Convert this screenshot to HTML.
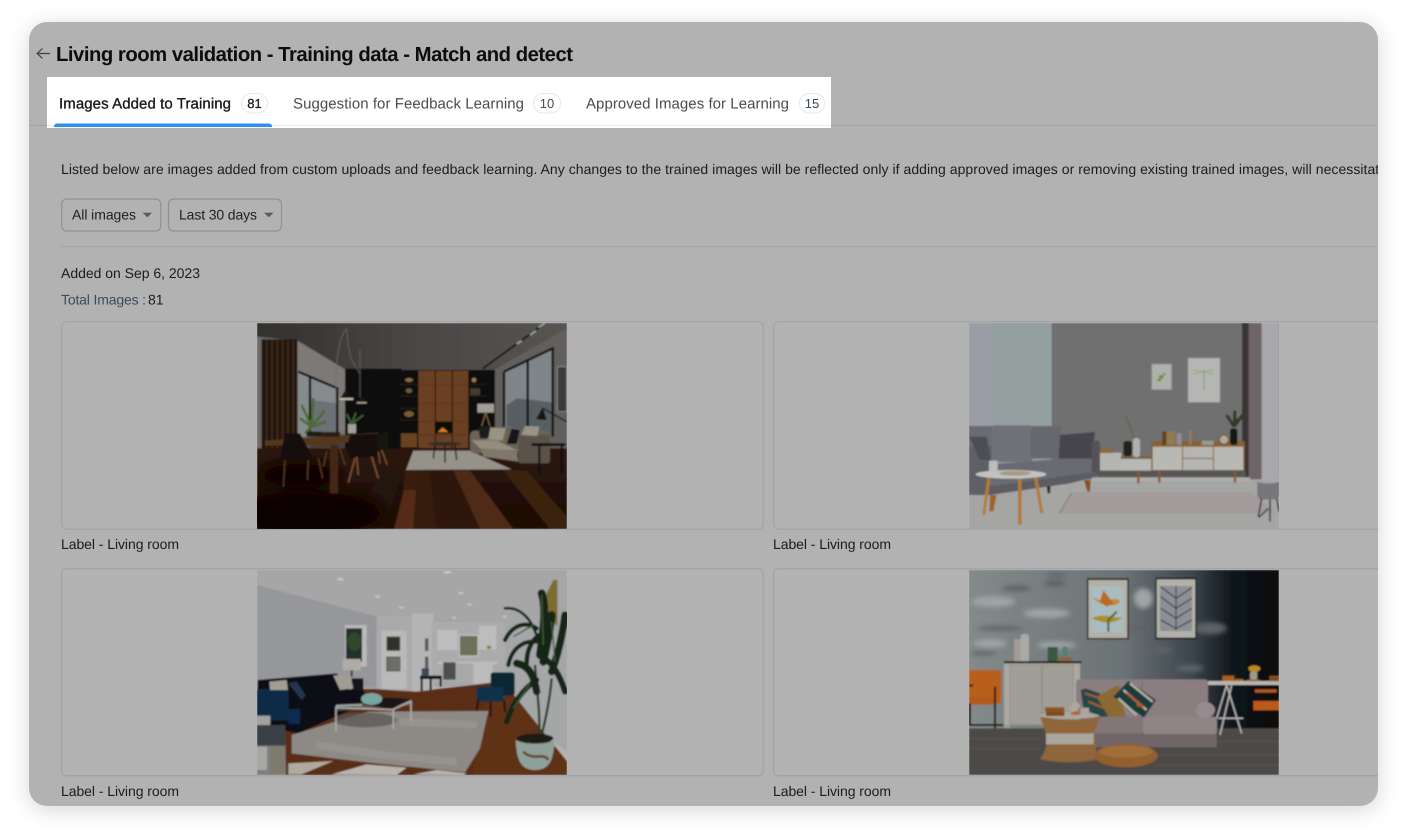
<!DOCTYPE html>
<html lang="en">
<head>
<meta charset="utf-8">
<title>Living room validation</title>
<style>
html,body{margin:0;padding:0;background:#fff;width:1407px;height:832px;overflow:hidden}
svg{display:block}
text{font-family:"Liberation Sans",Arial,sans-serif;text-rendering:geometricPrecision}
</style>
</head>
<body>
<svg xmlns="http://www.w3.org/2000/svg" width="1407" height="832" viewBox="0 0 1407 832">
<defs>
<filter id="sh" x="-10%" y="-10%" width="120%" height="120%"><feDropShadow dx="0" dy="4" stdDeviation="11" flood-color="#000" flood-opacity=".16"/></filter>
<filter id="b" x="-5%" y="-5%" width="110%" height="110%"><feGaussianBlur stdDeviation="2.600"/></filter>
<filter id="b2" x="-40%" y="-40%" width="180%" height="180%"><feGaussianBlur stdDeviation="16"/></filter>
<filter id="b3" x="-40%" y="-80%" width="180%" height="260%"><feGaussianBlur stdDeviation="7"/></filter>
<clipPath id="panel"><rect x="29" y="22" width="1349" height="784" rx="18"/></clipPath>
<clipPath id="c1"><rect x="21" y="9" width="930" height="618"/></clipPath>
<clipPath id="c2"><rect x="27" y="9" width="930" height="618"/></clipPath>
<clipPath id="c3"><rect x="21" y="15" width="930" height="615"/></clipPath>
<clipPath id="c4"><rect x="27" y="15" width="930" height="615"/></clipPath>
<linearGradient id="ceil" x1="0" y1="0" x2="1" y2="0"><stop offset="0" stop-color="#33302e"/><stop offset=".5" stop-color="#4a4644"/><stop offset="1" stop-color="#575452"/></linearGradient>
<linearGradient id="floor" x1="0" y1="0" x2="0" y2="1"><stop offset="0" stop-color="#2c1509"/><stop offset="1" stop-color="#1a0c05"/></linearGradient>
<linearGradient id="wall4" x1="0" y1="0" x2="1" y2="0"><stop offset="0" stop-color="#828a8a"/><stop offset=".5" stop-color="#6a7274"/><stop offset=".72" stop-color="#3c454d"/><stop offset=".85" stop-color="#10151b"/><stop offset="1" stop-color="#07090c"/></linearGradient>
<linearGradient id="wall3" x1="0" y1="0" x2="1" y2=".3"><stop offset="0" stop-color="#929398"/><stop offset="1" stop-color="#a8a8ab"/></linearGradient>
</defs>

<rect x="29" y="22" width="1349" height="784" rx="18" fill="#b2b2b2" filter="url(#sh)"/>

<g clip-path="url(#panel)">
<!-- header -->
<path d="M50 53.500H37.500M42.500 48.500L37.200 53.500L42.500 58.500" fill="none" stroke="#3f3f3f" stroke-width="1.200"/>
<text x="56" y="61" font-size="20.300" font-weight="700" fill="#0d0d0d" textLength="517" lengthAdjust="spacing">Living room validation - Training data - Match and detect</text>

<line x1="29" y1="125.500" x2="1378" y2="125.500" stroke="#a2a3a5" stroke-width="1"/>

<!-- highlighted tabs -->
<rect x="47" y="77" width="784" height="51" fill="#fff"/>
<line x1="47" y1="125.500" x2="831" y2="125.500" stroke="#e9ebee" stroke-width="1"/>
<path d="M54 127v-.5a3 3 0 0 1 3-3h212a3 3 0 0 1 3 3v.5z" fill="#2e8ff0"/>

<text x="59" y="108.500" font-size="15" fill="#1b1b1b" stroke="#1b1b1b" stroke-width=".35" textLength="172" lengthAdjust="spacing">Images Added to Training</text>
<rect x="241.500" y="93.500" width="26" height="19.500" rx="9.700" fill="#fff" stroke="#e6e8ee"/>
<text x="254.500" y="108" font-size="13" text-anchor="middle" fill="#1b1b1b" stroke="#1b1b1b" stroke-width=".3">81</text>

<text x="293" y="108.500" font-size="15" fill="#4a4c50" textLength="231" lengthAdjust="spacing">Suggestion for Feedback Learning</text>
<rect x="533.500" y="93.500" width="27" height="19.500" rx="9.700" fill="#fff" stroke="#e6e8ee"/>
<text x="547" y="108" font-size="13" text-anchor="middle" fill="#4a4c50">10</text>

<text x="586" y="108.500" font-size="15" fill="#4a4c50" textLength="203" lengthAdjust="spacing">Approved Images for Learning</text>
<rect x="799.500" y="93.500" width="25" height="19.500" rx="9.700" fill="#fff" stroke="#e6e8ee"/>
<text x="812" y="108" font-size="13" text-anchor="middle" fill="#3d4a5c">15</text>

<!-- intro -->
<text x="61" y="174" font-size="14" fill="#1c1c1c" textLength="1326" lengthAdjust="spacing">Listed below are images added from custom uploads and feedback learning. Any changes to the trained images will be reflected only if adding approved images or removing existing trained images, will necessitate</text>

<!-- dropdowns -->
<rect x="61.700" y="199" width="99" height="32" rx="5" fill="none" stroke="#8e9196" stroke-width="1.200"/>
<text x="72" y="219.500" font-size="14" fill="#1f1f1f" textLength="64" lengthAdjust="spacing">All images</text>
<path d="M142.500 212.800h9.500l-4.700 4.500z" fill="#55585c"/>
<rect x="168.500" y="199" width="113" height="32" rx="5" fill="none" stroke="#8e9196" stroke-width="1.200"/>
<text x="179" y="219.500" font-size="14" fill="#1f1f1f" textLength="78" lengthAdjust="spacing">Last 30 days</text>
<path d="M264 212.800h9.500l-4.700 4.500z" fill="#55585c"/>

<line x1="61" y1="246.500" x2="1378" y2="246.500" stroke="#a2a5a9" stroke-width="1"/>

<text x="61" y="278" font-size="14" fill="#1c1c1c" textLength="139" lengthAdjust="spacing">Added on Sep 6, 2023</text>
<text x="61" y="304.500" font-size="14" fill="#3d4a5c" textLength="85" lengthAdjust="spacing">Total Images :</text>
<text x="148" y="304.500" font-size="14" fill="#1c1c1c">81</text>

<!-- cards -->
<rect x="61.700" y="321.700" width="701.500" height="207.500" rx="5" fill="#b3b3b3" stroke="#a1a4a8" stroke-width="1.300"/>
<rect x="773.700" y="321.700" width="640" height="207.500" rx="5" fill="#b3b3b3" stroke="#a1a4a8" stroke-width="1.300"/>
<rect x="61.700" y="568.700" width="701.500" height="207" rx="5" fill="#b3b3b3" stroke="#a1a4a8" stroke-width="1.300"/>
<rect x="773.700" y="568.700" width="640" height="207" rx="5" fill="#b3b3b3" stroke="#a1a4a8" stroke-width="1.300"/>

<text x="61" y="549" font-size="14" fill="#1c1c1c" textLength="118" lengthAdjust="spacing">Label - Living room</text>
<text x="773" y="549" font-size="14" fill="#1c1c1c" textLength="118" lengthAdjust="spacing">Label - Living room</text>
<text x="61" y="796" font-size="14" fill="#1c1c1c" textLength="118" lengthAdjust="spacing">Label - Living room</text>
<text x="773" y="796" font-size="14" fill="#1c1c1c" textLength="118" lengthAdjust="spacing">Label - Living room</text>

<!-- Image 1 : dark modern room -->
<g transform="translate(250 320) scale(.33333)"><g clip-path="url(#c1)"><g filter="url(#b)">
<rect x="21" y="9" width="930" height="618" fill="#454140"/>
<polygon points="21,9 951,9 951,25 735,148 285,148 142,62 21,50" fill="url(#ceil)"/>
<polygon points="21,50 142,62 285,148 285,345 21,430" fill="#6c6967"/>
<polygon points="142,62 285,148 285,340 142,340" fill="#7c7977"/>
<polygon points="735,148 951,25 951,390 735,360" fill="#625f5d"/>
<rect x="35" y="58" width="107" height="382" fill="#241509"/>
<g stroke="#41291a" stroke-width="5"><path d="M50 60V438M66 60V438M82 60V438M98 60V438M114 60V438M130 60V438"/></g>
<polygon points="145,155 262,205 262,345 145,350" fill="#868c8e"/>
<polygon points="185,240 262,250 262,345 185,345" fill="#6a7275"/>
<path d="M145 155L262 205V345M180 172V345" fill="none" stroke="#0b0b0b" stroke-width="7"/>
<g stroke="#4d6a34" stroke-width="8" fill="none"><path d="M185 320L155 255M185 320L190 235M185 320L225 270M185 320L150 295M185 320L228 305M185 320L165 340"/></g>
<rect x="285" y="146" width="170" height="240" fill="#0a0807"/>
<rect x="450" y="150" width="285" height="236" fill="#110b07"/>
<rect x="505" y="152" width="150" height="232" fill="#6a3f22"/>
<path d="M556 152V384M607 152V384" stroke="#2d1a0d" stroke-width="4" fill="none"/>
<path d="M505 193H655M505 250H655M505 305H655M505 345H655" stroke="#54321a" stroke-width="2" fill="none"/>
<rect x="555" y="305" width="52" height="35" fill="#0b0806"/>
<path d="M563 336L578 322L595 336z" fill="#d97b2a"/>
<rect x="453" y="340" width="48" height="42" fill="#6b4222"/>
<ellipse cx="477" cy="282" rx="15" ry="9" fill="#7a5a34"/>
<ellipse cx="477" cy="212" rx="10" ry="7" fill="#6c5a42"/>
<ellipse cx="477" cy="180" rx="12" ry="6" fill="#8a6a3a"/>
<ellipse cx="672" cy="180" rx="7" ry="7" fill="#9a7a48"/>
<rect x="660" y="205" width="30" height="20" fill="#463a2e"/>
<path d="M450 193H505M450 228H505M450 265H505M450 300H505M658 193H708M658 228H708" stroke="#2c2018" stroke-width="3"/>
<rect x="682" y="251" width="50" height="27" fill="#a09c96"/>
<path d="M707 278L695 318M707 278L720 318" stroke="#8a6a4a" stroke-width="3"/>
<polygon points="762,155 908,85 908,350 762,320" fill="#7f8589"/>
<polygon points="770,255 800,235 850,240 908,248 908,350 770,320" fill="#585e63"/>
<path d="M762 155L908 85V350M833 120V320M762 155V320" fill="none" stroke="#0b0b0b" stroke-width="7"/>
<rect x="922" y="140" width="28" height="135" fill="#3b3938" stroke="#8a8886" stroke-width="3"/>
<path d="M698 146L885 10" stroke="#0f0f0f" stroke-width="5"/>
<path d="M800 72L815 62M840 45L858 32M866 22L885 10" stroke="#a5a5a5" stroke-width="5"/>
<rect x="21" y="385" width="930" height="242" fill="url(#floor)"/>
<polygon points="610,452 660,452 790,627 690,627" fill="#4f2a13"/>
<polygon points="500,452 540,452 560,627 490,627" fill="#361b0c"/>
<polygon points="432,627 462,510 498,510 490,627" fill="#542c14"/>
<polygon points="465,452 505,452 500,510 460,510" fill="#381b0b"/>
<polygon points="760,452 830,452 951,590 951,627 900,627" fill="#3a2010"/>
<polygon points="395,452 460,452 400,627 300,627" fill="#241208"/>
<polygon points="545,452 610,452 690,627 560,627" fill="#2d1609"/>
<ellipse cx="170" cy="580" rx="230" ry="70" fill="#0a0503" filter="url(#b2)"/>
<ellipse cx="150" cy="465" rx="120" ry="40" fill="#0c0604" filter="url(#b2)"/>
<polygon points="490,392 660,392 785,448 468,450" fill="#959289"/>
<rect x="660" y="332" width="240" height="68" rx="14" fill="#6c6458"/>
<polygon points="690,380 800,395 805,425 700,410" fill="#7f7769"/>
<polygon points="665,360 740,362 805,392 690,385" fill="#948c7e"/>
<rect x="805" y="345" width="95" height="85" rx="8" fill="#5a5248"/>
<path d="M710 358L720 322L768 325L758 362z" fill="#9a9282"/>
<path d="M690 355L685 322L722 318L715 355z" fill="#1a1a1f"/>
<path d="M770 372L785 325L810 330L800 372z" fill="#15161b"/>
<path d="M815 345L825 318L868 320L862 348z" fill="#9a9486"/>
<ellipse cx="584" cy="372" rx="52" ry="6" fill="#332e2a"/>
<path d="M555 375L550 415M615 375L620 420M585 375V428" stroke="#15110e" stroke-width="4"/>
<rect x="845" y="370" width="102" height="8" fill="#0c0b0a"/><path d="M868 375V460M935 375V460" stroke="#0c0b0a" stroke-width="6"/>
<path d="M878 265L950 305" stroke="#16120f" stroke-width="4"/><polygon points="858,298 878,262 890,300" fill="#15120f"/>
<polygon points="45,362 385,338 375,352 230,378 45,376" fill="#55381c"/>
<rect x="240" y="375" width="24" height="145" fill="#452712"/>
<polygon points="290,385 300,345 388,340 385,410 300,415" fill="#12100e"/>
<path d="M315 415L295 488M365 410L385 475M320 410L325 465" stroke="#7a5030" stroke-width="5"/>
<polygon points="380,345 417,330 412,390 382,395" fill="#17130f"/>
<path d="M395 390L412 435M385 395L390 430" stroke="#7a5030" stroke-width="4"/>
<polygon points="92,400 105,340 150,340 185,405 185,420 92,420" fill="#13110f"/>
<path d="M105 420L100 500M205 415L218 475M175 420L172 480" stroke="#5a3a22" stroke-width="4"/>
<rect x="170" y="335" width="45" height="15" fill="#1c1a18"/>
<path d="M230 395L220 440M270 385L285 435" stroke="#5a3a22" stroke-width="4"/>
<path d="M290 25C260 60 255 160 258 250M290 25C295 100 300 120 330 160M330 90V232" fill="none" stroke="#6e6a66" stroke-width="2"/>
<polygon points="267,240 288,208 310,240" fill="#15120f"/><rect x="268" y="234" width="42" height="6" fill="#bfb9a6"/>
<polygon points="320,250 335,230 350,250" fill="#1c1814"/><rect x="320" y="246" width="30" height="5" fill="#a89c86"/>
<rect x="294" y="312" width="24" height="28" fill="#a2a09a"/>
<g stroke="#3f5a34" stroke-width="6" fill="none"><path d="M305 312L290 282M305 312L318 278M305 312L340 285"/></g>
<rect x="215" y="336" width="55" height="14" fill="#2a1c12"/>
</g></g></g>

<!-- Image 2 : grey wall room -->
<g transform="translate(960 320) scale(.33333)"><g clip-path="url(#c2)"><g filter="url(#b)">
<rect x="27" y="9" width="250" height="480" fill="#93a09f"/>
<rect x="27" y="9" width="75" height="480" fill="#9a9da5"/>
<rect x="275" y="9" width="575" height="470" fill="#6f6f6f"/>
<rect x="846" y="9" width="112" height="470" fill="#3a3534"/>
<rect x="866" y="9" width="50" height="480" fill="#6f6566"/>
<rect x="905" y="9" width="52" height="470" fill="#a8a8ab"/>
<rect x="27" y="478" width="930" height="150" fill="#a5a5a4"/>
<rect x="575" y="132" width="60" height="77" fill="#aeb0ab" stroke="#8c8c8c" stroke-width="2"/>
<g stroke="#6b8e42" stroke-width="5"><path d="M592 182L615 160M598 175L610 172M600 185V165"/></g>
<rect x="684" y="114" width="96" height="133" fill="#b5b6b3" stroke="#929292" stroke-width="2"/>
<path d="M698 150L728 155L762 148M698 163L728 155L762 162" stroke="#93ab7a" stroke-width="3" fill="none"/><path d="M732 150V210" stroke="#8a8d86" stroke-width="3"/>
<polygon points="298,580 335,518 875,518 945,580" fill="#a39b9c"/>
<path d="M298 580L335 518" stroke="#7c7a78" stroke-width="3"/>
<rect x="412" y="398" width="72" height="54" fill="#b4b4b2"/>
<rect x="482" y="416" width="92" height="36" fill="#b8b8b6"/>
<rect x="482" y="411" width="92" height="5" fill="#7a5528"/>
<rect x="574" y="364" width="280" height="88" fill="#8a5f30"/>
<rect x="578" y="380" width="88" height="70" fill="#b8b8b5"/>
<rect x="669" y="380" width="90" height="34" fill="#b5b5b3"/>
<rect x="669" y="417" width="90" height="33" fill="#b5b5b3"/>
<rect x="762" y="380" width="88" height="70" fill="#b8b8b5"/>
<rect x="412" y="452" width="445" height="20" fill="#575655"/>
<rect x="395" y="472" width="475" height="12" fill="#adadac"/>
<path d="M535 452V490M598 452V488M825 452V488" stroke="#8a5a28" stroke-width="7"/>
<rect x="420" y="386" width="40" height="13" fill="#8c6b3a"/>
<rect x="608" y="335" width="38" height="40" fill="#8f7b55"/><rect x="607" y="335" width="12" height="40" fill="#654218"/>
<rect x="650" y="340" width="15" height="35" fill="#8e8e8c"/>
<rect x="519" y="354" width="21" height="58" rx="9" fill="#b0b0b0"/>
<rect x="490" y="363" width="26" height="46" rx="8" fill="#24211f"/>
<path d="M522 354C515 330 505 310 498 288" stroke="#59684a" stroke-width="4" fill="none"/>
<g stroke="#2e3a28" stroke-width="9" fill="none"><path d="M822 320L800 285M822 320L825 272M822 320L852 280M822 320L835 295"/></g>
<rect x="810" y="325" width="22" height="50" rx="8" fill="#141414"/>
<circle cx="792" cy="359" r="14" fill="#b3a89a" stroke="#7a4a28" stroke-width="3"/>
<rect x="687" y="328" width="8" height="45" fill="#97795a"/>
<rect x="725" y="362" width="36" height="13" fill="#989a90"/>
<rect x="27" y="318" width="70" height="120" fill="#6a6a72"/>
<rect x="27" y="380" width="70" height="145" fill="#5f6065"/>
<rect x="95" y="316" width="122" height="110" rx="8" fill="#717279"/>
<rect x="212" y="318" width="90" height="98" rx="8" fill="#66676d"/>
<path d="M300 345L405 336L395 416L296 416z" fill="#45454c"/>
<path d="M27 350H80L92 420H60z" fill="#4e4e55"/>
<path d="M100 432L320 415L412 416L410 462L130 505L90 500z" fill="#6a6b72"/>
<rect x="395" y="362" width="25" height="100" rx="8" fill="#525259"/>
<polygon points="85,500 90,525 330,490 410,470 405,455" fill="#5c5d63"/>
<polygon points="372,480 392,480 390,515 382,515" fill="#8c4f1c"/>
<polygon points="260,500 272,497 270,520 263,520" fill="#3b2a1c"/>
<polygon points="90,525 110,525 100,574 88,574" fill="#a0642a"/>
<ellipse cx="153" cy="463" rx="106" ry="13" fill="#c2c3c1"/>
<rect x="87" y="422" width="26" height="36" rx="5" fill="#bcbcba"/>
<ellipse cx="165" cy="460" rx="48" ry="7" fill="#a59a82"/>
<polygon points="82,473 92,473 75,585 67,585" fill="#b27a36"/>
<polygon points="222,473 232,473 250,580 241,580" fill="#b27a36"/>
<rect x="174" y="476" width="11" height="138" fill="#b27a36"/>
<rect x="892" y="478" width="66" height="60" rx="12" fill="#76777c"/>
<ellipse cx="925" cy="483" rx="33" ry="7" fill="#a7a8aa"/>
<path d="M905 535L895 590M930 538V605M950 535L957 575M925 565L897 592" stroke="#1d1d1d" stroke-width="4" fill="none"/>
</g></g></g>

<!-- Image 3 : bright open room -->
<g transform="translate(250 565) scale(.33333)"><g clip-path="url(#c3)"><g filter="url(#b)">
<rect x="21" y="15" width="930" height="350" fill="url(#wall3)"/>
<polygon points="21,15 951,15 951,30 800,175 380,155 21,60" fill="#a6a6a7"/>
<polygon points="21,60 380,155 380,370 21,350" fill="#96979b"/>
<rect x="380" y="155" width="105" height="225" fill="#aaaaac"/>
<rect x="395" y="197" width="75" height="175" fill="#b9b9b9"/>
<rect x="410" y="215" width="40" height="42" fill="#2d302e" stroke="#8a6e4c" stroke-width="2"/>
<rect x="410" y="276" width="40" height="42" fill="#6b6d68" stroke="#4a4a46" stroke-width="2"/>
<rect x="485" y="145" width="65" height="235" fill="#b4b4b6"/>
<rect x="525" y="220" width="10" height="38" fill="#555a52"/><rect x="525" y="275" width="10" height="40" fill="#585c55"/>
<rect x="545" y="170" width="220" height="180" fill="#ababab"/>
<rect x="562" y="195" width="60" height="60" fill="#bdbdbd"/>
<rect x="625" y="208" width="62" height="68" fill="#bbb"/>
<rect x="630" y="213" width="52" height="58" fill="#6e6f58"/>
<rect x="687" y="182" width="52" height="72" fill="#bdbdbd"/>
<ellipse cx="717" cy="247" rx="7" ry="6" fill="#6e9a3c"/>
<rect x="563" y="290" width="178" height="8" fill="#bdbdbd"/>
<rect x="580" y="292" width="37" height="52" fill="#4e4f50"/>
<rect x="620" y="295" width="48" height="48" fill="#a8a8a8"/>
<rect x="670" y="292" width="58" height="65" fill="#bcbcbc"/>
<polygon points="765,175 951,30 951,560 870,500 765,400" fill="#a5a6a8"/>
<rect x="285" y="180" width="65" height="125" fill="#b9b9ba"/>
<rect x="288" y="190" width="48" height="100" fill="#21302a"/>
<ellipse cx="313" cy="230" rx="20" ry="28" fill="#32472e"/>
<polygon points="21,375 375,372 500,380 751,350 951,630 21,630" fill="#5a2f18"/>
<polygon points="690,440 760,350 951,590 951,630 670,630" fill="#5f3318"/>
<rect x="278" y="282" width="54" height="34" fill="#b0aca5"/>
<path d="M305 316V335" stroke="#433b32" stroke-width="6"/>
<rect x="305" y="340" width="35" height="40" fill="#151517"/>
<polygon points="23,345 260,325 300,375 345,380 335,420 145,505 23,480" fill="#0c0c12"/>
<rect x="21" y="372" width="95" height="95" rx="8" fill="#0b2c47"/>
<polygon points="58,350 110,345 114,375 60,375" fill="#a29e96"/>
<polygon points="115,355 140,350 167,392 155,405" fill="#26354f"/>
<polygon points="250,332 300,328 310,370 270,375" fill="#a09c94"/>
<rect x="115" y="432" width="35" height="45" fill="#0a2a50"/>
<polygon points="125,510 355,440 715,438 690,550 645,622 330,590 125,565" fill="#8d8a86"/>
<path d="M200 540L400 570L620 590M450 470L680 480" stroke="#9d9a96" stroke-width="22" fill="none" opacity=".6"/>
<ellipse cx="345" cy="465" rx="95" ry="22" fill="#5a5754" opacity=".75"/>
<polygon points="258,420 485,402 485,420 258,438" fill="#8d8f90" opacity=".5"/>
<polygon points="335,420 405,398 485,402 425,430" fill="#121416"/>
<path d="M258 425V498M430 432V492M483 408V468" stroke="#a9abab" stroke-width="5"/>
<path d="M258 422L335 420M258 428L428 434L485 408" stroke="#a9abab" stroke-width="5" fill="none"/>
<ellipse cx="365" cy="402" rx="32" ry="18" fill="#77a5a0"/>
<rect x="510" y="332" width="65" height="10" fill="#0e0d0f"/>
<path d="M515 340V378M542 340V375M572 340V365" stroke="#0e0d0f" stroke-width="6"/>
<rect x="515" y="310" width="22" height="24" fill="#3c4a5a"/>
<rect x="722" y="322" width="72" height="70" rx="8" fill="#0d2534"/>
<rect x="680" y="365" width="80" height="45" rx="6" fill="#0e3148"/>
<path d="M685 405L680 435M722 410V455M762 405L765 440" stroke="#0a0a0a" stroke-width="5"/>
<polygon points="21,480 105,482 108,630 21,630" fill="#7e7e80"/>
<rect x="21" y="480" width="85" height="62" fill="#3b3f44"/>
<rect x="62" y="545" width="42" height="85" fill="#7f7a6e"/>
<rect x="21" y="545" width="30" height="70" fill="#a6a8a6"/>
<rect x="21" y="452" width="40" height="28" fill="#a2a2a2"/>
<polygon points="115,595 250,588 155,628 115,628" fill="#b0a99c"/>
<polygon points="245,628 350,598 470,608 440,630" fill="#b7b4ac"/>
<polygon points="490,628 560,615 650,625 640,630" fill="#b7b4ac"/>
<polygon points="910,45 922,45 922,185 890,140 885,95" fill="#7d6c30"/>
<path d="M868 505C870 440 862 390 855 300M875 510C890 450 900 400 905 340" stroke="#2a3a22" stroke-width="7" fill="none"/>
<g fill="none" stroke="#142618" stroke-linecap="round">
<path d="M875 85C890 130 880 200 870 270" stroke-width="24"/>
<path d="M765 130C810 125 850 160 868 240" stroke-width="8"/>
<path d="M765 225C790 175 830 170 860 190" stroke-width="12"/>
<path d="M775 300C785 250 820 225 860 230" stroke-width="12"/>
<path d="M905 150C900 200 890 240 880 290" stroke-width="24"/>
<path d="M945 150C935 230 920 280 905 320" stroke-width="22"/>
<path d="M945 380C930 330 905 290 880 280" stroke-width="18"/>
<path d="M770 470C785 420 820 370 860 345" stroke-width="16"/>
<path d="M800 295C830 300 850 320 860 380" stroke-width="22"/>
<path d="M830 295C830 250 850 220 870 210" stroke-width="14"/>
</g>
<path d="M875 90L880 240M790 215L850 180M905 170L915 290M790 430L840 355" stroke="#3f5c36" stroke-width="4" fill="none"/>
<ellipse cx="855" cy="520" rx="55" ry="14" fill="#1d1a17"/>
<path d="M797 525C800 590 815 615 855 615C895 615 912 590 913 525C890 540 825 540 797 525z" fill="#8ea09a"/>
<path d="M820 560C850 590 880 560 895 585" stroke="#6a4a30" stroke-width="8" fill="none"/>
<g fill="#c6c6c4"><ellipse cx="272" cy="43" rx="10" ry="4"/><ellipse cx="592" cy="22" rx="12" ry="4"/><ellipse cx="383" cy="95" rx="8" ry="3"/><ellipse cx="454" cy="128" rx="8" ry="3"/><ellipse cx="633" cy="84" rx="8" ry="3"/><ellipse cx="659" cy="118" rx="8" ry="3"/><ellipse cx="613" cy="158" rx="6" ry="3"/><ellipse cx="764" cy="155" rx="6" ry="3"/></g>
</g></g></g>

<!-- Image 4 : textured wall room -->
<g transform="translate(960 565) scale(.33333)"><g clip-path="url(#c4)"><g filter="url(#b)">
<rect x="27" y="15" width="930" height="480" fill="url(#wall4)"/>
<g fill="#5c6467" filter="url(#b3)"><ellipse cx="285" cy="55" rx="32" ry="10"/><ellipse cx="170" cy="70" rx="45" ry="9"/><ellipse cx="120" cy="190" rx="70" ry="7"/><ellipse cx="595" cy="255" rx="45" ry="10"/><ellipse cx="690" cy="310" rx="40" ry="11"/><ellipse cx="540" cy="190" rx="35" ry="7"/><ellipse cx="750" cy="190" rx="50" ry="18"/><ellipse cx="290" cy="30" rx="30" ry="6"/><ellipse cx="70" cy="265" rx="40" ry="6"/></g>
<g fill="#9fa5a4" filter="url(#b3)"><ellipse cx="100" cy="110" rx="65" ry="16"/><ellipse cx="260" cy="145" rx="70" ry="14"/><ellipse cx="550" cy="100" rx="28" ry="30"/><ellipse cx="90" cy="235" rx="50" ry="12"/><ellipse cx="290" cy="240" rx="60" ry="10"/></g>
<rect x="381" y="40" width="125" height="183" fill="#16181a"/>
<rect x="385" y="45" width="117" height="174" fill="#b3b0a6"/>
<rect x="393" y="64" width="98" height="136" fill="#a9bcc0"/>
<path d="M395 95C430 120 470 90 480 110C465 130 420 125 395 95z" fill="#c7862a"/>
<path d="M430 75L445 95L460 115L440 125L420 110z" fill="#b86c22"/>
<path d="M395 160C430 140 470 165 490 155C460 180 430 175 395 160z" fill="#ae8e2a"/>
<path d="M445 200L445 165L470 140" stroke="#3e6a34" stroke-width="6" fill="none"/>
<rect x="586" y="38" width="124" height="185" fill="#16181a"/>
<rect x="590" y="43" width="116" height="175" fill="#b2b0a8"/>
<rect x="600" y="63" width="96" height="135" fill="#8b9096"/>
<path d="M648 63V198M648 100L602 65M648 130L602 95M648 160L602 130M648 190L602 165M648 100L696 68M648 130L696 100M648 160L696 130M648 190L696 165" stroke="#2b2d32" stroke-width="3" fill="none"/>
<rect x="162" y="222" width="28" height="68" rx="5" fill="#a09c95"/>
<rect x="182" y="207" width="25" height="85" rx="8" fill="#aca9a2"/>
<rect x="263" y="246" width="30" height="44" fill="#385842"/>
<rect x="307" y="245" width="16" height="32" rx="6" fill="#55807a"/>
<rect x="294" y="276" width="40" height="15" fill="#8a6440"/>
<rect x="132" y="289" width="232" height="6" fill="#141414"/>
<rect x="132" y="295" width="228" height="185" fill="#aaa8a0"/>
<rect x="150" y="300" width="95" height="178" fill="#a09e96" stroke="#8a887f" stroke-width="2"/>
<rect x="248" y="300" width="92" height="178" fill="#a09e96" stroke="#8a887f" stroke-width="2"/>
<rect x="132" y="478" width="18" height="16" fill="#9d9b95"/>
<rect x="27" y="315" width="97" height="100" rx="6" fill="#b85f1b"/>
<rect x="27" y="395" width="75" height="24" fill="#b25a1a"/>
<path d="M105 365V495M27 480H130M30 415V480M28 362H38" stroke="#141414" stroke-width="6" fill="none"/>
<rect x="27" y="490" width="930" height="140" fill="#4e4a47"/>
<g stroke="#635e5a" stroke-width="3" opacity=".6"><path d="M27 520H240M27 550H240M590 570H957M590 600H957M770 530H957"/></g>
<rect x="744" y="348" width="213" height="12" fill="#b7b5b0"/>
<path d="M800 360L770 460M800 360L845 505M815 360L780 510M775 460H850" stroke="#b0aeaa" stroke-width="5" fill="none"/>
<rect x="885" y="373" width="65" height="10" fill="#b8591a"/>
<rect x="880" y="408" width="77" height="28" fill="#ba5a18"/>
<path d="M875 430V490" stroke="#0d0d0d" stroke-width="7"/>
<rect x="787" y="332" width="36" height="16" fill="#a8601e"/>
<rect x="825" y="342" width="25" height="6" fill="#a8601e"/>
<rect x="928" y="333" width="29" height="7" fill="#8f5522"/><rect x="928" y="342" width="29" height="7" fill="#8f5522"/>
<ellipse cx="880" cy="346" rx="22" ry="3" fill="#8a6232"/>
<rect x="870" y="320" width="22" height="24" rx="5" fill="#a09888"/>
<ellipse cx="883" cy="311" rx="18" ry="10" fill="#b98b25"/>
<rect x="348" y="343" width="396" height="118" rx="10" fill="#8a7e80"/>
<rect x="545" y="345" width="2" height="110" fill="#756a6c"/>
<rect x="400" y="505" width="370" height="42" fill="#706668"/>
<rect x="400" y="455" width="150" height="50" rx="5" fill="#827678"/>
<rect x="549" y="455" width="222" height="52" rx="8" fill="#908486"/>
<ellipse cx="736" cy="435" rx="29" ry="24" fill="#958a8c"/>
<polygon points="362,375 378,370 420,385 458,455 420,455 370,430" fill="#28474a"/>
<path d="M375 385L420 400M385 410L435 430" stroke="#a95a28" stroke-width="6"/>
<polygon points="410,395 475,360 497,455 445,455" fill="#8a6a32"/>
<polygon points="460,395 505,348 588,405 552,458" fill="#1b3a3c"/>
<path d="M490 375L560 435M475 400L530 450M510 355L578 410" stroke="#b5b0a0" stroke-width="7" fill="none"/>
<path d="M500 385L550 425L530 420" stroke="#b6541f" stroke-width="6" fill="none"/>
<path d="M240 452C280 468 380 468 420 452L402 505C408 540 412 570 405 585C350 595 290 595 240 582C262 550 264 530 258 505z" fill="#8f653a"/>
<ellipse cx="328" cy="452" rx="90" ry="9" fill="#a9a8a3"/>
<polygon points="258,505 402,505 400,538 258,538" fill="#aaa69c"/>
<ellipse cx="498" cy="572" rx="95" ry="35" fill="#92612d"/>
<ellipse cx="498" cy="560" rx="80" ry="18" fill="#a06e38"/>
<path d="M345 405L362 422L345 445L325 432z" fill="#aca89d"/><rect x="362" y="428" width="25" height="24" fill="#a9a79e"/>
<rect x="255" y="427" width="58" height="14" fill="#8e5220"/>
<rect x="258" y="441" width="55" height="12" fill="#7e4a1c"/>
<ellipse cx="347" cy="445" rx="15" ry="5" fill="#b9641d"/>
</g></g></g>
</g>
</svg>
</body>
</html>
